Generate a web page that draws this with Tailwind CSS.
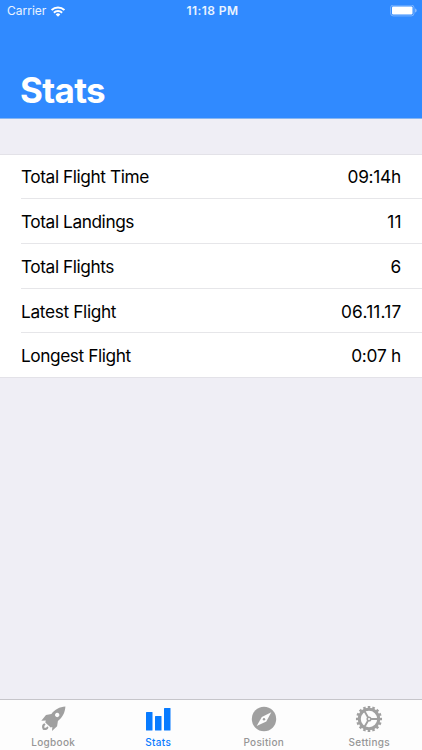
<!DOCTYPE html>
<html lang="en">
<head>
<meta charset="utf-8">
<title>Stats</title>
<script src="https://cdn.jsdelivr.net/npm/@tailwindcss/browser@4"></script>
</head>
<body class="m-0 overflow-hidden">
<div class="flex h-[750px] w-[422px] flex-col bg-[#efeef5] font-['Inter','Liberation_Sans',sans-serif] text-black">
  <header class="flex h-[119px] shrink-0 flex-col justify-between border-b border-[#86b6f2] bg-[#308aff] text-white">
    <div class="grid h-[22px] grid-cols-3 items-center pr-[5px] pl-[7px]">
      <div class="flex items-center gap-[5px]">
        <span class="text-[12px] leading-[22px] text-white/90">Carrier</span>
        <svg class="h-[11px] w-[14px]" viewBox="0 0 14 11" fill="none" stroke="#fff" stroke-width="2"><path d="M.6 4.100a9 9 0 0 1 12.800 0M2.900 6.700a5.700 5.700 0 0 1 8.200 0"/><path d="M7 10.700 4.700 8.400a3.300 3.300 0 0 1 4.600 0Z" fill="#fff" stroke="none"/></svg>
      </div>
      <span class="pl-[1px] text-center text-[12px] leading-[22px] font-semibold tracking-[0.4px] text-white/90">11:18 PM</span>
      <svg class="h-[12px] w-[27px] justify-self-end" viewBox="0 0 27 12"><rect x=".6" y=".1" width="23.400" height="10.800" rx="2.600" fill="none" stroke="#fff" stroke-opacity=".35"/><rect x="2" y="1.500" width="20.500" height="8" rx="1.100" fill="#fff"/><path d="M25.200 3.500v4c.8-.3 1.400-1.100 1.400-2s-.6-1.700-1.400-2Z" fill="#fff" fill-opacity=".5"/></svg>
    </div>
    <h1 class="pb-[7px] pl-[20px] text-[35px] leading-[42px] font-bold tracking-[-0.7px]">Stats</h1>
  </header>

  <main class="flex-1 pt-[35px]">
    <dl class="border-y border-[#e3e2e8] bg-white text-[17.3px] tracking-[-0.43px]">
      <div class="flex h-[44px] pl-[21px]"><div class="flex flex-1 items-center justify-between border-b border-[#e6e6e9] pt-[1px] pr-[21px]"><dt>Total Flight Time</dt><dd class="tracking-[-0.25px]">09:14h</dd></div></div>
      <div class="flex h-[45px] pl-[21px]"><div class="flex flex-1 items-center justify-between border-b border-[#e6e6e9] pt-[2px] pr-[20px]"><dt>Total Landings</dt><dd class="tracking-[0.4px]">11</dd></div></div>
      <div class="flex h-[45px] pl-[21px]"><div class="flex flex-1 items-center justify-between border-b border-[#e6e6e9] pt-[2px] pr-[21px]"><dt>Total Flights</dt><dd class="tracking-[-0.25px]">6</dd></div></div>
      <div class="flex h-[44px] pl-[21px]"><div class="flex flex-1 items-center justify-between border-b border-[#e6e6e9] pt-[2px] pr-[20.5px]"><dt class="tracking-[-0.35px]">Latest Flight</dt><dd class="tracking-[0.2px]">06.11.17</dd></div></div>
      <div class="flex h-[44px] pl-[21px]"><div class="flex flex-1 items-center justify-between pt-[1px] pr-[21px]"><dt>Longest Flight</dt><dd class="tracking-[-0.25px]">0:07 h</dd></div></div>
    </dl>
  </main>

  <nav class="grid h-[51px] shrink-0 grid-cols-4 border-t border-[#c6c5ca] bg-[#fdfdfd] text-[10px] font-medium tracking-[0.3px] text-[#969696]">
    <a class="flex flex-col items-center pt-[5px]">
      <svg class="h-[28px] w-[28px]" viewBox="0 0 28 28" fill="#a0a0a0"><path fill-rule="evenodd" d="M26.400 1.500C20.500 1.800 15.800 4.400 12.400 9L7 9.900 2.300 15.700 6.800 15.500 6.300 17.500 11.700 22.600 13.300 22 13 26.100 18.100 21.200 18.900 16.100C23.800 12.200 26 7.500 26.400 1.500ZM18.200 7.800a2.200 2.200 0 1 0 .01 0Z"/><path d="M5.300 18.300C2.900 19.300 2.300 21.600 3.900 24.700 6.500 25.300 8.700 24.900 9.500 22.400L8.200 21.200C7.700 22.400 6.800 23 5.600 22.900 5 21.600 5.500 20.300 6.600 19.600Z"/></svg>
      <span class="mt-[2px] pl-[1px] leading-[15px]">Logbook</span>
    </a>
    <a class="flex flex-col items-center pt-[5px] text-[#087bff]">
      <svg class="h-[28px] w-[28px]" viewBox="0 0 28 28" fill="#087bff"><rect x="2" y="7" width="6.500" height="18.500" rx=".5"/><rect x="11" y="11" width="6.500" height="14.500" rx=".5"/><rect x="20" y="3" width="6.500" height="22.500" rx=".5"/></svg>
      <span class="mt-[2px] leading-[15px]">Stats</span>
    </a>
    <a class="flex flex-col items-center pt-[5px]">
      <svg class="h-[28px] w-[28px]" viewBox="0 0 28 28"><circle cx="14" cy="14" r="12.200" fill="#a0a0a0"/><path d="M21.300 7.300 16.300 16.400 6.700 21 11.800 12Z" fill="#fdfdfd"/><circle cx="14" cy="14.200" r="1.200" fill="#a0a0a0"/></svg>
      <span class="mt-[2px] leading-[15px]">Position</span>
    </a>
    <a class="flex flex-col items-center pt-[5px]">
      <svg class="h-[28px] w-[28px]" viewBox="0 0 28 28" fill="none" stroke="#a0a0a0"><circle cx="14" cy="14" r="9.700" stroke-width="3"/><circle cx="14" cy="14" r="11.900" stroke-width="2.300" pathLength="160" stroke-dasharray="5.500 4.500" stroke-dashoffset="2.700"/><circle cx="14" cy="14" r="1.800" stroke-width="1.500"/><path d="M16 14H23M13 12.200 9.400 6M13 15.800 9.400 22" stroke-width="1.900"/></svg>
      <span class="mt-[2px] leading-[15px]">Settings</span>
    </a>
  </nav>
</div>
</body>
</html>
